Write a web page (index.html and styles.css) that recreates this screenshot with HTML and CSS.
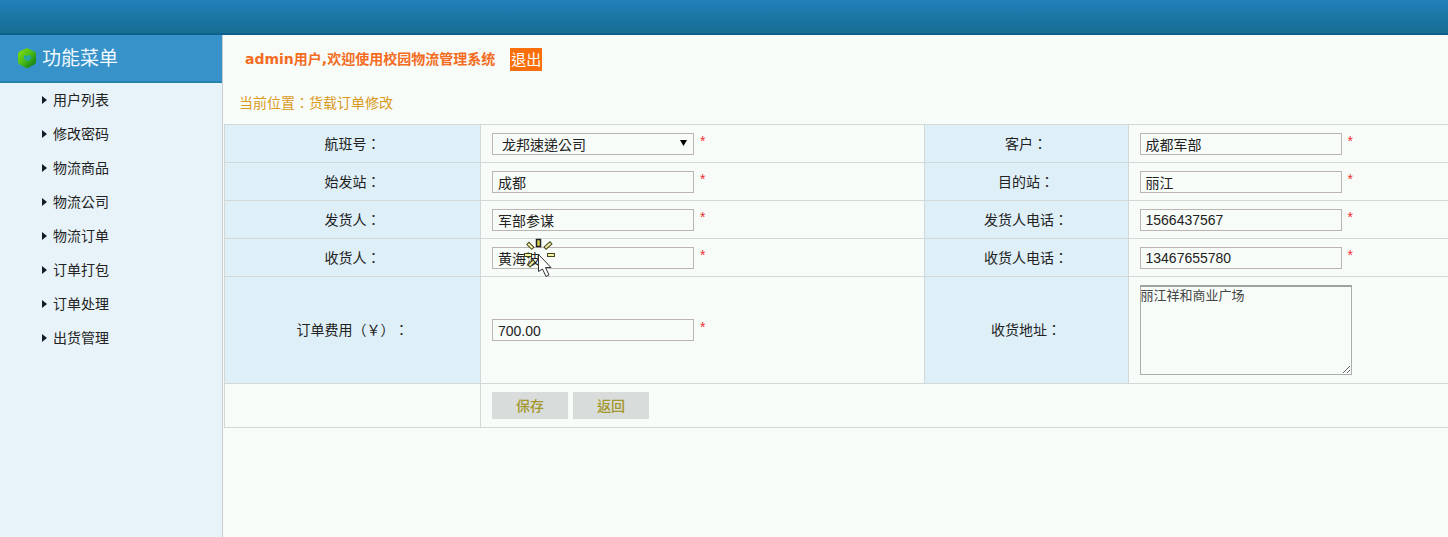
FILE: index.html
```html
<!DOCTYPE html>
<html lang="zh-Hant">
<head>
<meta charset="utf-8">
<title>校园物流管理系统</title>
<link rel="stylesheet" href="styles.css">
</head>
<body>
<header class="topbar"></header>
<div class="layout">
  <aside class="sidebar">
    <h2 class="menu-title">
      <svg class="gem" viewBox="0 0 20 22" aria-hidden="true">
        <defs>
          <linearGradient id="gem-fill" x1="0" y1="0" x2="1" y2="1">
            <stop offset="0" stop-color="#8fe000"/>
            <stop offset=".45" stop-color="#4cbf1a"/>
            <stop offset="1" stop-color="#05700f"/>
          </linearGradient>
        </defs>
        <path d="M10 1 17.500 4.500Q19 5.200 19 7V15Q19 16.500 17.700 17.200L10 21.500 2.300 17.200Q1 16.500 1 15V7Q1 5.200 2.500 4.500Z" fill="url(#gem-fill)"/>
        <path d="M7 8.500H13.500L14.500 11 11 14.500 7 12Z" fill="#27a79c"/>
      </svg>
      <span>功能菜单</span>
    </h2>
    <nav>
      <ul class="menu">
        <li><a href="#">用户列表</a></li>
        <li><a href="#">修改密码</a></li>
        <li><a href="#">物流商品</a></li>
        <li><a href="#">物流公司</a></li>
        <li><a href="#">物流订单</a></li>
        <li><a href="#">订单打包</a></li>
        <li><a href="#">订单处理</a></li>
        <li><a href="#">出货管理</a></li>
      </ul>
    </nav>
  </aside>
  <main class="content">
    <div class="welcome"><strong>admin用户,欢迎使用校园物流管理系统</strong><a class="logout" href="#">退出</a></div>
    <div class="crumb">当前位置：货载订单修改</div>
    <form>
      <table class="form-table">
        <colgroup><col class="col-label"><col><col class="col-label-right"><col class="col-last"></colgroup>
        <tbody>
          <tr>
            <th><label for="flight">航班号：</label></th>
            <td><div class="field"><span class="select-box"><select id="flight"><option>龙邦速递公司</option></select><svg class="arrow" viewBox="0 0 7 6" aria-hidden="true"><path d="M0 0H7L3.500 6Z"/></svg></span><span class="req">*</span></div></td>
            <th><label for="customer">客户：</label></th>
            <td><div class="field"><input id="customer" type="text" value="成都军部"><span class="req">*</span></div></td>
          </tr>
          <tr>
            <th><label for="origin">始发站：</label></th>
            <td><div class="field"><input id="origin" type="text" value="成都"><span class="req">*</span></div></td>
            <th><label for="dest">目的站：</label></th>
            <td><div class="field"><input id="dest" type="text" value="丽江"><span class="req">*</span></div></td>
          </tr>
          <tr>
            <th><label for="sender">发货人：</label></th>
            <td><div class="field"><input id="sender" type="text" value="军部参谋"><span class="req">*</span></div></td>
            <th><label for="sender-tel">发货人电话：</label></th>
            <td><div class="field"><input id="sender-tel" type="text" value="1566437567"><span class="req">*</span></div></td>
          </tr>
          <tr>
            <th><label for="receiver">收货人：</label></th>
            <td><div class="field"><input id="receiver" type="text" value="黄海波"><span class="req">*</span>
              <svg class="cursor" viewBox="0 0 34 42" aria-hidden="true">
                <g fill="#f3f0a0" stroke="#444420">
                  <rect x="13.500" y="1.500" width="4" height="7" fill="#d8d250" stroke="#222" stroke-width="1.500"/>
                  <rect x="4" y="6" width="7" height="3" transform="rotate(45 7 7.500)"/>
                  <rect x="21" y="6" width="8" height="3" transform="rotate(-42 25 7.500)"/>
                  <rect x="1.500" y="15.500" width="7" height="3"/>
                  <rect x="24.500" y="15.500" width="7" height="3"/>
                  <rect x="5" y="24" width="7" height="3" transform="rotate(-45 8.500 25.500)"/>
                </g>
                <path d="M15.500 16.500V33.500L19.500 31 23 38.500 26 37 22.500 29.500H28Z" fill="#fff" stroke="#333"/>
              </svg></div></td>
            <th><label for="receiver-tel">收货人电话：</label></th>
            <td><div class="field"><input id="receiver-tel" type="text" value="13467655780"><span class="req">*</span></div></td>
          </tr>
          <tr class="tall">
            <th><label for="fee">订单费用（￥）：</label></th>
            <td><div class="field"><input id="fee" type="text" value="700.00"><span class="req">*</span></div></td>
            <th><label for="address">收货地址：</label></th>
            <td><textarea id="address">丽江祥和商业广场</textarea></td>
          </tr>
          <tr class="actions">
            <td></td>
            <td colspan="3"><div class="buttons"><button type="button">保存</button><button type="button">返回</button></div></td>
          </tr>
        </tbody>
      </table>
    </form>
  </main>
</div>
</body>
</html>
```
FILE: styles.css
```css
* { box-sizing: border-box; }
body {
  margin: 0;
  min-height: 100vh;
  display: flex;
  flex-direction: column;
  background: #f8fcf9;
  color: #222;
  font: 14px/20px "Liberation Sans", "Noto Sans CJK TC", sans-serif;
  text-spacing-trim: space-all;
}
.topbar {
  height: 35px;
  background: linear-gradient(#2381ba, #17709a 80%, #186f93);
  border-bottom: 2px solid #0f5f8c;
}
.layout { flex: 1; display: flex; }
.sidebar {
  flex: none;
  width: 223px;
  background: #e8f3f9;
  border-right: 1px solid #c9cdcf;
}
.menu-title {
  display: flex;
  align-items: center;
  gap: 5px;
  height: 48px;
  margin: 0;
  padding-left: 17px;
  background: #3792ca;
  border-bottom: 2px solid #2583ac;
  color: #f2faff;
  font-size: 19px;
  font-weight: 400;
  line-height: 24px;
}
.menu-title span { padding-top: 2px; }
.gem { width: 20px; height: 22px; }
.menu { list-style: none; margin: 0; padding: 0; }
.menu a {
  display: flex;
  align-items: center;
  gap: 6px;
  height: 34px;
  padding-left: 42px;
  color: #222;
  text-decoration: none;
}
.menu a::before {
  content: "";
  border: solid transparent;
  border-width: 4px 0 4px 5px;
  border-left-color: #111c28;
}
.content { flex: 1; min-width: 0; padding-left: 1px; }
.welcome {
  display: flex;
  align-items: center;
  gap: 15px;
  height: 48px;
  padding-left: 21px;
  color: #f36c21;
}
.welcome strong { font-family: "DejaVu Sans", "Noto Sans CJK TC", sans-serif; }
.logout {
  padding: 1px;
  background: #f96f0c;
  color: #fff;
  font-size: 15px;
  line-height: 21px;
  text-decoration: none;
}
.crumb {
  height: 41px;
  padding-left: 15px;
  color: #d99a1c;
  line-height: 40px;
}
.form-table {
  width: 100%;
  table-layout: fixed;
  border-collapse: collapse;
}
.col-label { width: 256px; }
.col-label-right { width: 204px; }
.col-last { width: 320px; }
.form-table th, .form-table td {
  height: 38px;
  padding: 0 0 0 11px;
  border: 1px solid #d2d8d8;
  border-right: 0;
}
.form-table th {
  padding: 0;
  background: #deeff8;
  font-weight: 400;
  text-align: center;
}
.form-table .tall th, .form-table .tall td { height: 107px; }
.form-table .actions td { height: 44px; }
.field { position: relative; display: flex; align-items: center; gap: 6px; }
.field input, .select-box { width: 202px; height: 22px; }
.field input, select {
  margin: 0;
  padding: 1px 5px 0;
  border: 1px solid #bcb3b3;
  border-radius: 0;
  background: transparent;
  color: #222;
  font: inherit;
}
.select-box { position: relative; display: block; }
select { width: 100%; height: 100%; padding: 1px 9px 0; appearance: none; }
.arrow {
  position: absolute;
  top: 7px;
  right: 7px;
  width: 7px;
  height: 6px;
  pointer-events: none;
}
.req { padding-bottom: 6px; color: #f02c34; line-height: 16px; }
.cursor {
  position: absolute;
  top: -9px;
  left: 31px;
  width: 34px;
  height: 42px;
  pointer-events: none;
}
textarea {
  display: block;
  width: 212px;
  height: 90px;
  margin: 0;
  padding: 0;
  border: 1px solid #a9adab;
  border-top: 2px solid #9da19f;
  background: transparent;
  color: #444;
  font: 13px/18px "Liberation Sans", "Noto Sans CJK TC", sans-serif;
}
.buttons { display: flex; gap: 5px; }
button {
  width: 76px;
  height: 27px;
  padding: 0;
  border: 0;
  background: #d8dcda;
  color: #a3962b;
  font: inherit;
  font-weight: 500;
}
```
